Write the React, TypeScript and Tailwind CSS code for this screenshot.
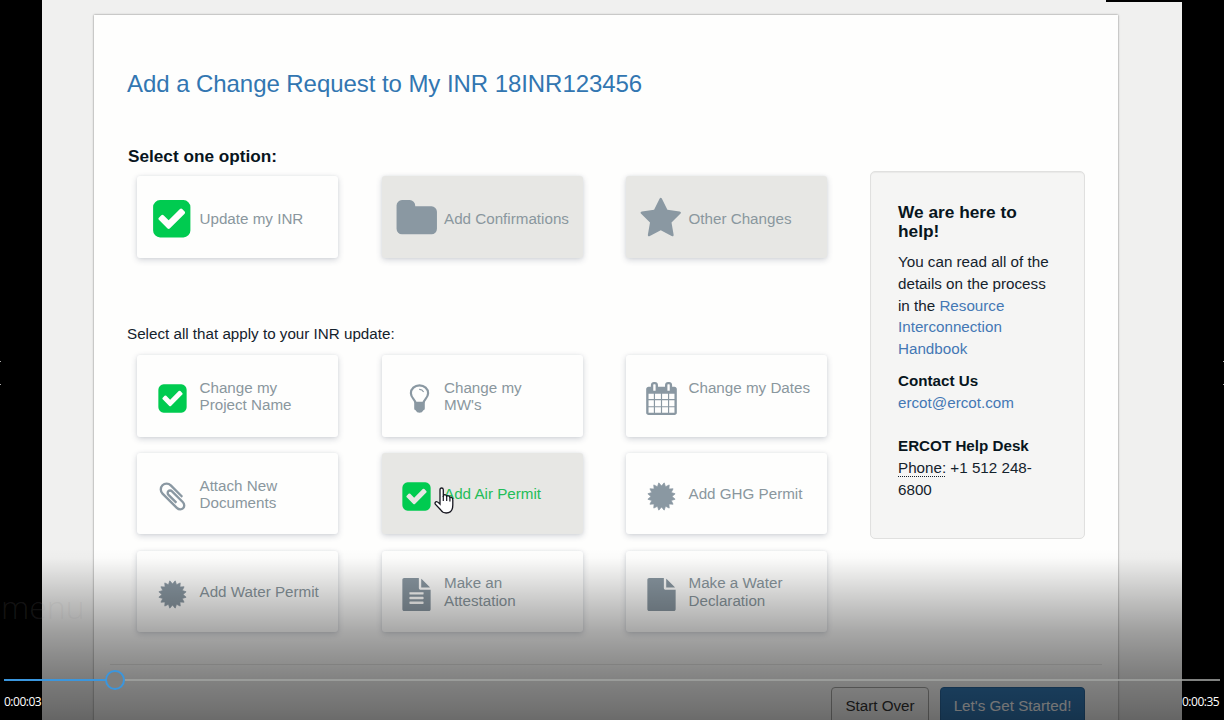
import React from "react";

const icons = {
  check:
    "M813 1299l614-614q19-19 19-45t-19-45l-102-102q-19-19-45-19t-45 19l-467 467-211-211q-19-19-45-19t-45 19l-102 102q-19 19-19 45t19 45l358 358q19 19 45 19t45-19zm851-883v960q0 119-84.5 203.5t-203.5 84.5h-960q-119 0-203.5-84.5t-84.5-203.5v-960q0-119 84.5-203.5t203.5-84.5h960q119 0 203.5 84.5t84.5 203.5z",
  folder:
    "M1728 608v704q0 92-66 158t-158 66h-1216q-92 0-158-66t-66-158v-960q0-92 66-158t158-66h320q92 0 158 66t66 158v32h672q92 0 158 66t66 158z",
  star: "M1728 647q0 22-26 48l-363 354 86 500q1 7 1 20 0 21-10.5 35.5t-30.5 14.5q-19 0-40-12l-449-236-449 236q-22 12-40 12-21 0-31.5-14.5t-10.5-35.5q0-6 2-20l86-500-364-354q-25-27-25-48 0-37 56-46l502-73 225-455q19-41 49-41t49 41l225 455 502 73q56 9 56 46z",
  calendar:
    "M192 1664h288v-288h-288v288zm352 0h320v-288h-320v288zm-352-352h288v-320h-288v320zm352 0h320v-320h-320v320zm-352-384h288v-288h-288v288zm736 736h320v-288h-320v288zm-384-736h320v-288h-320v288zm768 736h288v-288h-288v288zm-384-352h320v-320h-320v320zm-352-864v-288q0-13-9.5-22.5t-22.5-9.5h-64q-13 0-22.5 9.5t-9.5 22.5v288q0 13 9.5 22.5t22.5 9.5h64q13 0 22.5-9.5t9.5-22.5zm736 864h288v-320h-288v320zm-384-384h320v-288h-320v288zm384 0h288v-288h-288v288zm32-480v-288q0-13-9.5-22.5t-22.5-9.5h-64q-13 0-22.5 9.5t-9.5 22.5v288q0 13 9.5 22.5t22.5 9.5h64q13 0 22.5-9.5t9.5-22.5zm384-64v1280q0 52-38 90t-90 38h-1408q-52 0-90-38t-38-90v-1280q0-52 38-90t90-38h128v-96q0-66 47-113t113-47h64q66 0 113 47t47 113v96h384v-96q0-66 47-113t113-47h64q66 0 113 47t47 113v96h128q52 0 90 38t38 90z",
  clip: "M1596 1385q0 117-79 196t-196 79q-135 0-235-100l-777-776q-113-115-113-271 0-159 110-270t269-111q158 0 273 113l605 606q10 10 10 22 0 16-30.5 46.5t-46.5 30.5q-13 0-23-10l-606-607q-79-77-181-77-106 0-179 75t-73 181q0 105 76 181l776 777q63 63 145 63 64 0 106-42t42-106q0-82-63-145l-581-581q-26-24-60-24-29 0-48 19t-19 48q0 32 25 59l410 410q10 10 10 22 0 16-31 47t-47 31q-12 0-22-10l-410-410q-63-61-63-149 0-82 57-139t139-57q88 0 149 63l581 581q100 98 100 235z",
  fileText:
    "M1596 476q14 14 28 36h-472v-472q22 14 36 28zm-572 68q0 40 28 68t68 28h544v1056q0 40-28 68t-68 28h-1344q-40 0-68-28t-28-68v-1600q0-40 28-68t68-28h800v544zm256 832v-64q0-14-9-23t-23-9h-704q-14 0-23 9t-9 23v64q0 14 9 23t23 9h704q14 0 23-9t9-23zm0-256v-64q0-14-9-23t-23-9h-704q-14 0-23 9t-9 23v64q0 14 9 23t23 9h704q14 0 23-9t9-23zm0-256v-64q0-14-9-23t-23-9h-704q-14 0-23 9t-9 23v64q0 14 9 23t23 9h704q14 0 23-9t9-23z",
  file: "M1152 512v-472q22 14 36 28l408 408q14 14 28 36h-472zm-128 32q0 40 28 68t68 28h544v1056q0 40-28 68t-68 28h-1344q-40 0-68-28t-28-68v-1600q0-40 28-68t68-28h800v544z",
};

// Sixteen-toothed rosette, with a notch at the top centre.
const sealPoints = Array.from({ length: 32 }, (_, i) => {
  const radius = i % 2 === 0 ? 570 : 755;
  const angle = (i * Math.PI) / 16 - Math.PI / 2;
  return `${(896 + radius * Math.cos(angle)).toFixed(0)},${(896 + radius * Math.sin(angle)).toFixed(0)}`;
}).join(" ");

interface Option {
  icon: keyof typeof icons | "bulb" | "seal";
  lines: string[];
  shaded?: boolean;
  green?: boolean;
}

const primary: Option[] = [
  { icon: "check", lines: ["Update my INR"] },
  { icon: "folder", lines: ["Add Confirmations"], shaded: true },
  { icon: "star", lines: ["Other Changes"], shaded: true },
];

const updates: Option[] = [
  { icon: "check", lines: ["Change my", "Project Name"] },
  { icon: "bulb", lines: ["Change my", "MW's"] },
  { icon: "calendar", lines: ["Change my Dates", "\u00a0"] },
  { icon: "clip", lines: ["Attach New", "Documents"] },
  { icon: "check", lines: ["Add Air Permit"], shaded: true, green: true },
  { icon: "seal", lines: ["Add GHG Permit"] },
  { icon: "seal", lines: ["Add Water Permit"] },
  { icon: "fileText", lines: ["Make an", "Attestation"] },
  { icon: "file", lines: ["Make a Water", "Declaration"] },
];

function Icon({ name, large }: { name: Option["icon"]; large: boolean }) {
  if (name === "bulb") {
    return (
      <svg viewBox="0 0 33 33" className="ml-[5px] size-[33px] shrink-0">
        <path
          d="M12.4 20.6C12.1 17.6 7.9 16 7.9 11.2C7.9 6.8 11.6 3.4 16.5 3.4S25.1 6.8 25.1 11.2C25.1 16 20.9 17.6 20.6 20.6"
          className="fill-none stroke-[#8a98a2] stroke-[2.2]"
        />
        <path d="M16.2 7.4Q19.2 7.3 20.6 10" className="fill-none stroke-[#8a98a2] stroke-[1.1]" />
        <path
          d="M11.2 19.8H21.8V26.4Q21.8 27.8 20.4 28.2Q19.2 30.8 16.5 30.8T12.6 28.2Q11.2 27.8 11.2 26.4Z"
          className="fill-[#8a98a2]"
        />
      </svg>
    );
  }
  return (
    <svg
      viewBox="0 0 1792 1792"
      className={`shrink-0 ${large ? "size-[43.5px]" : "size-[33px]"} ${name === "check" ? "fill-[#00cb50]" : "fill-[#8a98a2]"}`}
    >
      {name === "seal" ? (
        <polygon points={sealPoints} strokeLinejoin="round" className="stroke-[#8a98a2] stroke-[40px]" />
      ) : (
        <path d={icons[name]} />
      )}
    </svg>
  );
}

function Card({ option, large = false }: { option: Option; large?: boolean }) {
  const { icon, lines, shaded, green } = option;
  return (
    <div
      className={`flex h-[81.5px] w-[201px] items-center rounded-[3px] shadow-[0_2px_6px_rgba(40,50,80,0.2),0_0_3px_rgba(40,50,80,0.06)] ${shaded ? "bg-[#e7e7e4]" : "bg-[#fefefd]"}`}
    >
      <div className={`flex w-[62.5px] shrink-0 justify-center ${large ? "pt-[4px] pl-[7px]" : "pt-[6px] pl-2"}`}>
        <Icon name={icon} large={large} />
      </div>
      <div
        className={`text-[15.2px] leading-[17.5px] whitespace-nowrap ${large ? "pt-[3.5px]" : "pt-px"} ${green ? "text-[#23bd58]" : "text-[#8a979e]"}`}
      >
        {lines.map((line, i) => (
          <div key={i}>{line}</div>
        ))}
      </div>
    </div>
  );
}

function HelpPanel() {
  return (
    <aside className="mt-[69.5px] h-[368px] w-[215px] shrink-0 rounded-[5px] border border-[#e0e0df] bg-[#f5f5f4] px-[27px] pt-[31.5px] text-[15.2px] leading-[21.75px] text-[#14222c] shadow-[inset_0_1px_1px_rgba(0,0,0,0.05)]">
      <h2 className="text-[17.3px] leading-[18.5px] font-bold text-[#08151d]">
        We are here to
        <br />
        help!
      </h2>
      <p className="mt-[11px] whitespace-nowrap">
        You can read all of the
        <br />
        details on the process
        <br />
        in the <a className="text-[#4478b4]">Resource</a>
        <br />
        <a className="text-[#4478b4]">Interconnection</a>
        <br />
        <a className="text-[#4478b4]">Handbook</a>
      </p>
      <div className="mt-[10.5px] font-bold text-[#08151d]">Contact Us</div>
      <a className="block text-[#4478b4]">ercot@ercot.com</a>
      <div className="mt-[21.5px] font-bold whitespace-nowrap text-[#08151d]">ERCOT Help Desk</div>
      <div className="whitespace-nowrap">
        <span className="underline decoration-dotted decoration-1 underline-offset-[3px]">Phone:</span> +1 512 248-
        <br />
        6800
      </div>
    </aside>
  );
}

function PlayerControls() {
  return (
    <>
      <div className="absolute inset-x-0 bottom-0 h-[172px] bg-[linear-gradient(to_bottom,rgba(0,0,0,0)_0px,rgba(0,0,0,0.01)_10px,rgba(0,0,0,0.1)_30px,rgba(0,0,0,0.22)_56px,rgba(0,0,0,0.34)_84px,rgba(0,0,0,0.42)_108px,rgba(0,0,0,0.49)_132px,rgba(0,0,0,0.55)_160px,rgba(0,0,0,0.58)_172px)]" />
      <div className="absolute top-[588px] left-[1px] font-['Open_Sans',sans-serif] text-[32px] leading-[38px] font-light text-[#8c8c8c]/15">
        menu
      </div>
      <div className="absolute top-[679px] left-1 h-[2px] w-[1216px] bg-[#a0a3a0]/80" />
      <div className="absolute top-[679px] left-1 h-[2px] w-[101px] bg-[#3b96dd]" />
      <div className="absolute top-[670px] left-[105px] size-[20px] rounded-full border-2 border-[#3b96dd] bg-[#7f7f7d]" />
      <div className="absolute top-[693px] left-1 font-['Open_Sans',sans-serif] text-[12px] leading-[18px] tracking-[-0.5px] text-white">
        0:00:03
      </div>
      <div className="absolute top-[693px] left-[1182px] font-['Open_Sans',sans-serif] text-[12px] leading-[18px] tracking-[-0.5px] text-white">
        0:00:35
      </div>
      <div className="absolute top-[361px] left-0 h-[24px] w-px border-y border-[#aaa]" />
      <div className="absolute top-[361px] right-0 h-[24px] w-px border-y border-[#aaa]" />
    </>
  );
}

export default function App() {
  return (
    <div className="relative h-[720px] w-[1224px] overflow-hidden bg-black px-[42px] font-['Liberation_Sans',Arial,sans-serif]">
      <div className="h-full bg-[#f0f0ef] pt-[15px] pl-[52px]">
        <main className="flex h-[720px] w-[1024px] flex-col bg-[#fefefd] px-[33px] pt-[53px] shadow-[0_0_2px_rgba(0,0,0,0.5)]">
          <h1 className="h-[33px] text-[24px] leading-[32px] tracking-[-0.06px] whitespace-nowrap text-[#3276b1]">
            Add a Change Request to My INR 18INR123456
          </h1>
          <div className="flex h-[563px] gap-[42px]">
            <section className="w-[701px] shrink-0 pt-[45px]">
              <h2 className="h-[20px] pl-px text-[17.2px] leading-[20px] font-bold text-[#08151d]">
                Select one option:
              </h2>
              <div className="mt-[10px] ml-[10px] grid grid-cols-[repeat(3,201px)] gap-x-[43.5px]">
                {primary.map((o) => (
                  <Card key={o.lines[0]} option={o} large />
                ))}
              </div>
              <p className="mt-[66.5px] h-[20px] text-[15.2px] leading-[20px] text-[#14222c]">
                Select all that apply to your INR update:
              </p>
              <div className="mt-[11px] ml-[10px] grid grid-cols-[repeat(3,201px)] gap-x-[43.5px] gap-y-[16.25px]">
                {updates.map((o) => (
                  <Card key={o.lines.join(" ")} option={o} />
                ))}
              </div>
            </section>
            <HelpPanel />
          </div>
          <hr className="-mx-[17px] border-[#e8e8e6]" />
          <div className="mt-[22px] flex gap-[11px] self-end text-[15.2px]">
            <button className="h-[38px] w-[98px] rounded-[4px] border border-[#a8a8a6] bg-[#fefefd] whitespace-nowrap text-[#333]">
              Start Over
            </button>
            <button className="h-[38px] w-[145px] rounded-[4px] border border-[#2b689f] bg-[#337ab7] whitespace-nowrap text-white">
              Let's Get Started!
            </button>
          </div>
        </main>
      </div>
      <div className="absolute top-0 left-[1106px] h-[2px] w-[76px] bg-black" />
      <svg viewBox="0 0 20 28" className="absolute top-[487px] left-[434px] h-[28px] w-[20px]">
        <path
          d="M6 17V2.8Q6 1 7.6 1T9.3 2.8V10Q9.5 7.5 11 7.7 12.7 8 12.7 10 13 8.4 14.5 8.8 15.9 9.1 15.9 11 16.3 9.8 17.6 10.4 18.8 11 18.8 12.8V18Q18.8 26 12.2 26 8.6 26 6.8 23L1.3 17.2Q.5 15.5 2 14.7 3.3 14.1 6 17Z"
          className="fill-white stroke-[#16161f] stroke-[1.3]"
        />
        <path d="M9.3 9V14M12.7 10V14M15.9 11V14.5" className="fill-none stroke-[#16161f] stroke-[1.2]" />
      </svg>
      <PlayerControls />
    </div>
  );
}
